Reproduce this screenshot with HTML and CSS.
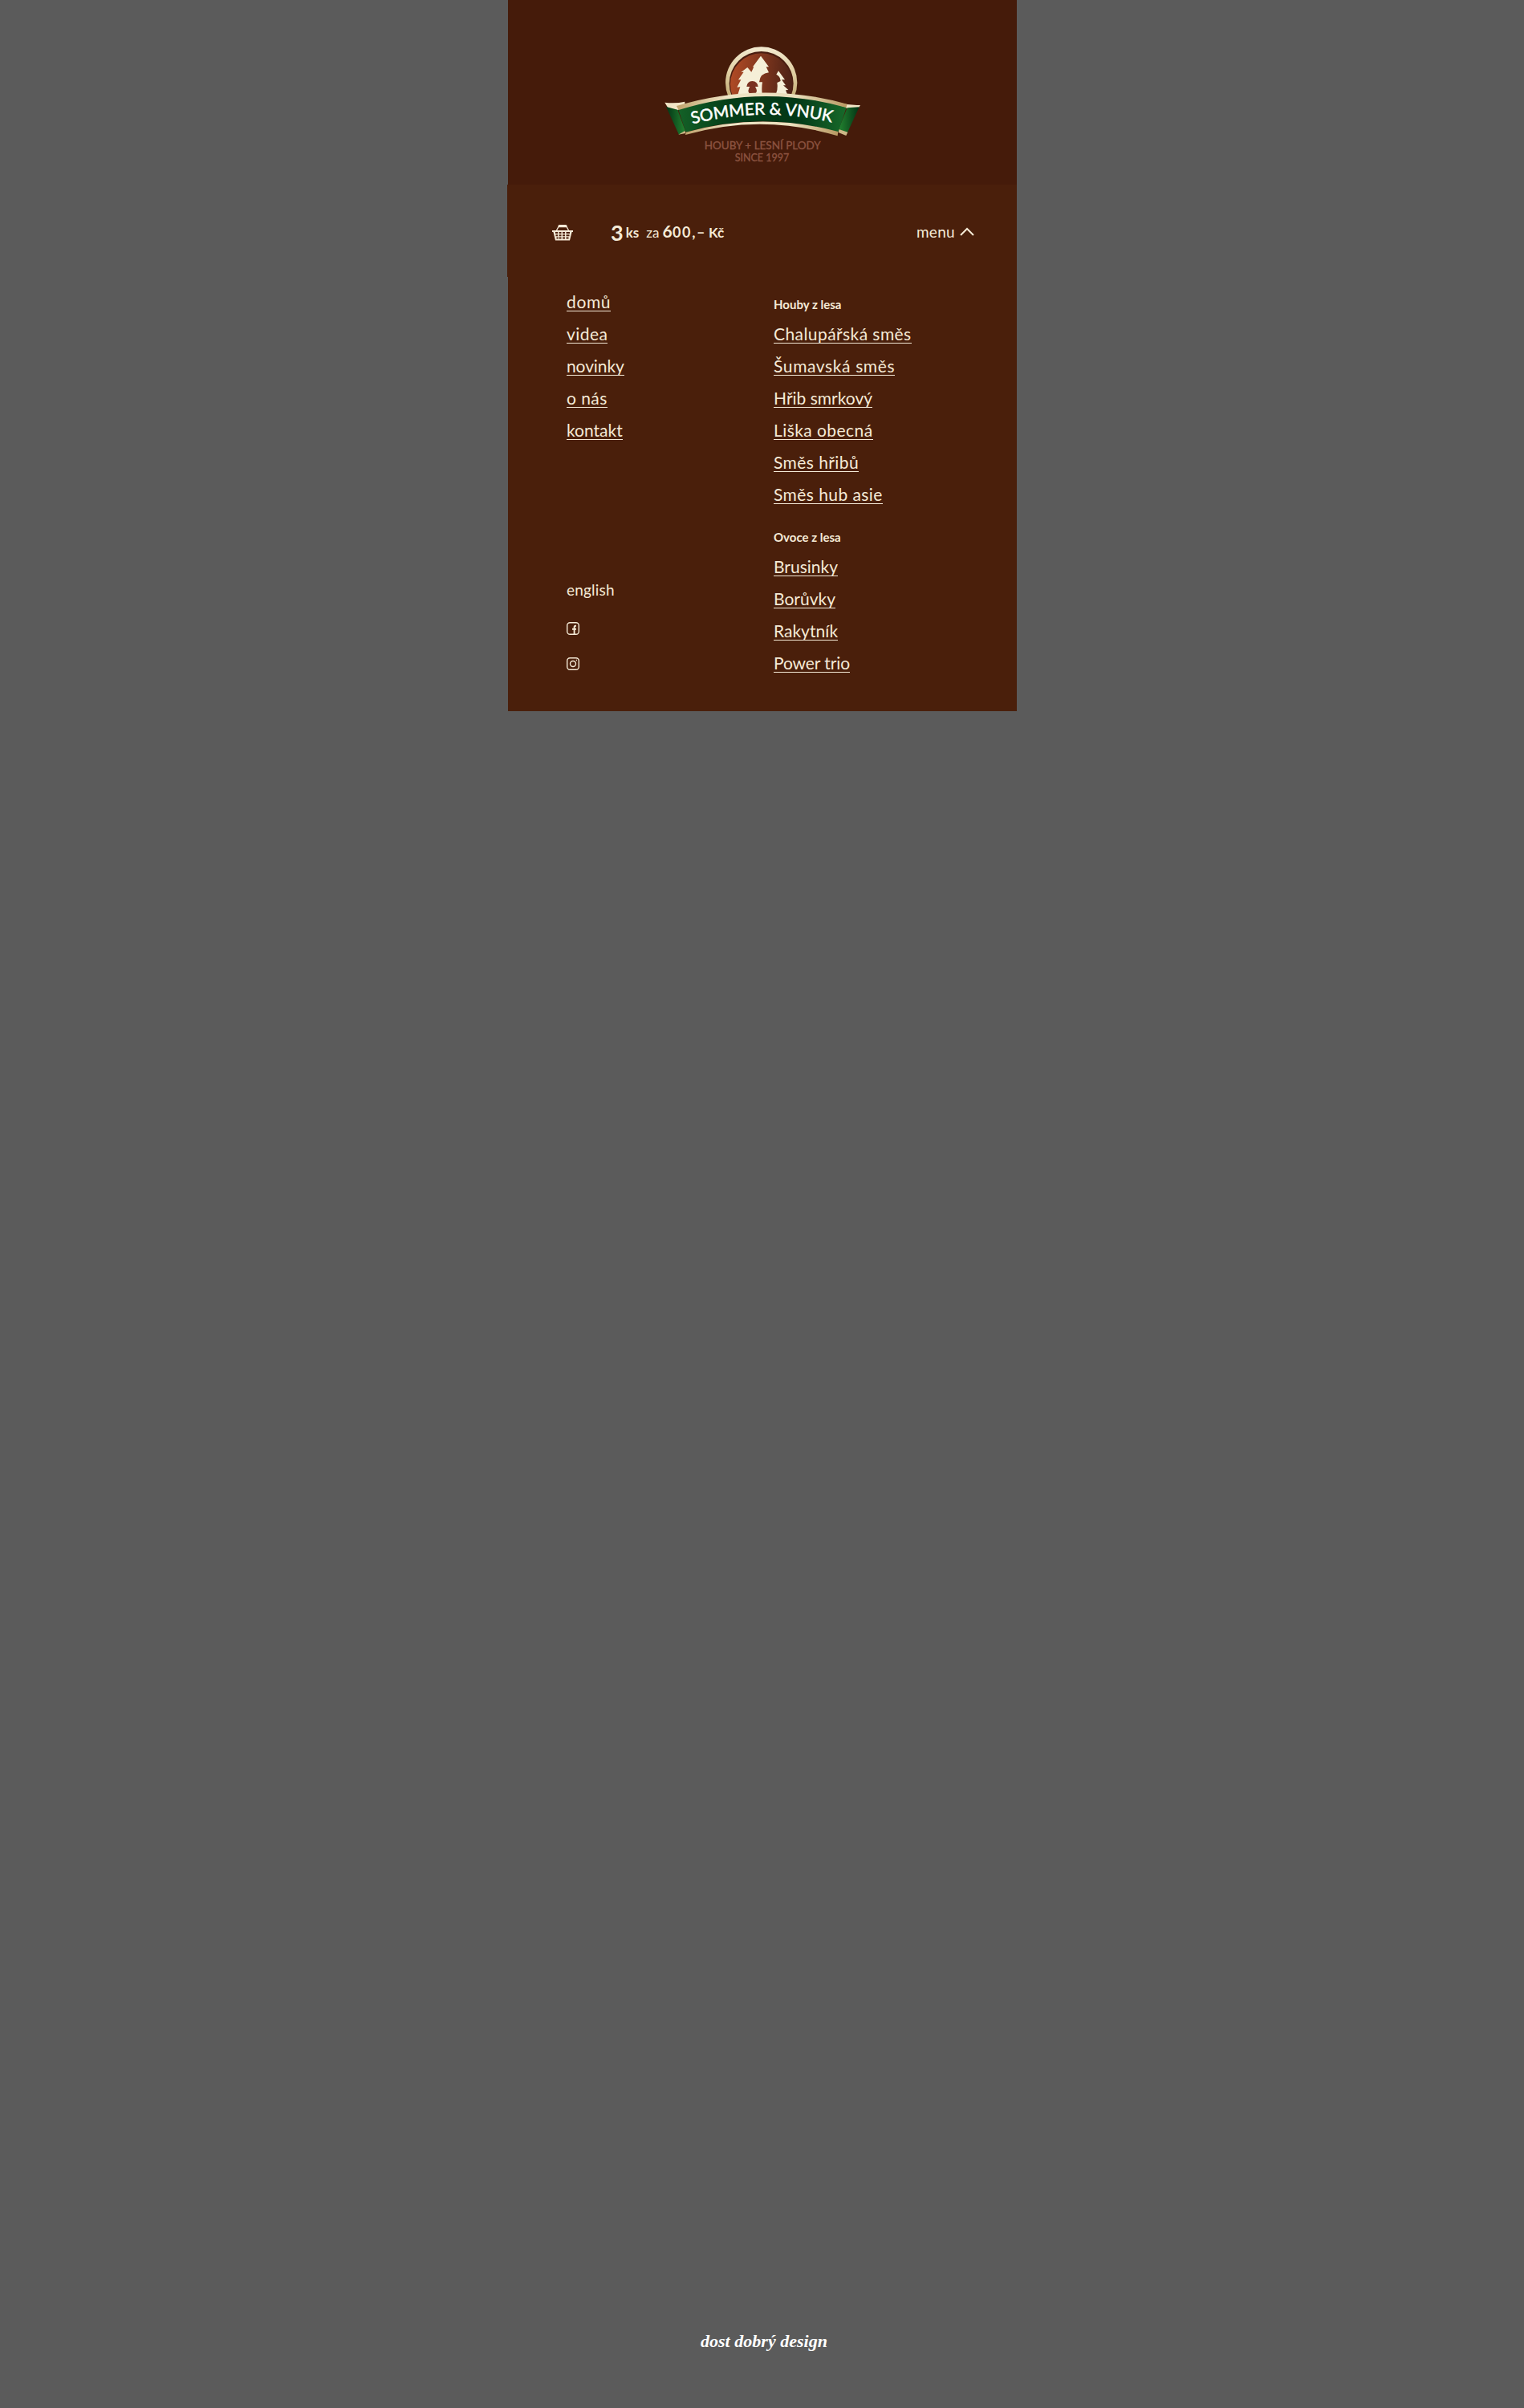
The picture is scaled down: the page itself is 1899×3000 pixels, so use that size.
FILE: index.html
```
<!DOCTYPE html>
<html lang="cs">
<head>
<meta charset="utf-8">
<title>Sommer &amp; Vnuk</title>
<link rel="stylesheet" href="styles.css">
</head>
<body>
<div class="page">
  <header class="header">
    <svg class="logo" viewBox="0 0 840 540" role="img" aria-label="Sommer &amp; Vnuk">
      <defs>
        <linearGradient id="disc" x1="0" x2="1" y1=".4" y2=".5"><stop offset="0" stop-color="#b04a25"/><stop offset="1" stop-color="#4b2115"/></linearGradient>
        <linearGradient id="ring" x1="0" x2="0" y1="0" y2="1"><stop offset="0" stop-color="#f3ead0"/><stop offset=".35" stop-color="#e0cfa3"/><stop offset=".75" stop-color="#bfa76e"/></linearGradient>
        <linearGradient id="green" x1="0" x2="1"><stop offset="0" stop-color="#146127"/><stop offset=".3" stop-color="#043d18"/><stop offset=".7" stop-color="#033817"/><stop offset="1" stop-color="#176a2a"/></linearGradient>
        <linearGradient id="gold" x1="0" x2="1"><stop offset="0" stop-color="#c0a26b"/><stop offset=".3" stop-color="#efe5c6"/><stop offset=".7" stop-color="#eadfbc"/><stop offset="1" stop-color="#b89861"/></linearGradient>
        <linearGradient id="tailL" x1="0" x2="1"><stop offset="0" stop-color="#023315"/><stop offset="1" stop-color="#238330"/></linearGradient>
        <linearGradient id="tailR" x1="0" x2="1"><stop offset="0" stop-color="#238330"/><stop offset="1" stop-color="#023315"/></linearGradient>
        <path id="arc" d="M158 344Q420 276 682 338"/>
      </defs>
      <circle cx="416" cy="189" r="134" fill="url(#ring)"/>
      <circle cx="416" cy="192" r="120" fill="#4a1d10"/>
      <circle cx="416" cy="195" r="116" fill="url(#disc)"/>
      <path fill="#f5efd7" d="M414 89L444 130L434 130L444 151Q411 154 408 187L420 187Q416 210 420 240H326L337 205L325 206L340 178L330 178L350 149L340 150L364 132L379 149L388 130L384 130Z"/>
      <path fill="#f5efd7" d="M480 145L504 178L492 178L507 199L498 199L517 216L507 217L516 240H466Q480 216 475 189L488 183Q487 165 472 158Z"/>
      <path fill="#7a3220" d="M361 204Q363 184 382 183Q402 184 404 204H393Q399 214 399 220Q396 233 382 234Q369 232 367 220Q368 211 373 204Z"/>
      <path fill="#f1e5c6" d="M55 263Q95 268 130 260V278L104 292H72Z"/>
      <path fill="url(#tailL)" d="M60 279L103 290L132 370L108 383Z"/>
      <path fill="#cdb887" d="M106 383L130 369L133 378Z"/>
      <path fill="#f1e5c6" d="M711 265Q747 275 786 273L780 283L735 285L710 278Z"/>
      <path fill="url(#tailR)" d="M737 283L782 280L737 377L705 363Z"/>
      <path fill="#cdb887" d="M706 363L739 374L733 387L704 375Z"/>
      <path fill="url(#green)" d="M106 290Q418 184 734 281L703 374Q418 294 134 374Z"/>
      <path fill="url(#gold)" d="M99 276Q418 180 737 269L733 282Q418 193 107 291Z"/>
      <path fill="url(#gold)" d="M134 374Q418 296 703 372L701 388Q418 302 132 384Z"/>
      <text class="logo-name"><textPath href="#arc" textLength="526" lengthAdjust="spacingAndGlyphs">SOMMER &amp; VNUK</textPath></text>
      <text class="logo-claim" x="203" y="438" textLength="435" lengthAdjust="spacingAndGlyphs">HOUBY + LESNÍ PLODY</text>
      <text class="logo-claim" x="317" y="483" textLength="203" lengthAdjust="spacingAndGlyphs">SINCE 1997</text>
    </svg>
  </header>

  <div class="bar">
    <svg class="basket" viewBox="0 0 26 20">
      <path d="M5 8L8 2.500H18L21 8" fill="none" stroke="currentColor" stroke-width="1.300"/>
      <path d="M9 1.500H17" stroke="currentColor" stroke-width="3" stroke-linecap="round"/>
      <path d="M0 7H26V9H24.600L22 19.500H4L1.400 9H0Z" fill="currentColor"/>
      <path class="basket-holes" d="M4 10H7M8.500 10H11.500M13 10H16M17.500 10H22M4.500 13.200H7M8.500 13.200H11.500M13 13.200H16M17.500 13.200H21.500M5.500 16.500H7.500M8.500 16.500H11.500M13 16.500H16M17.500 16.500H20.500"/>
    </svg>
    <p class="cart"><b class="count">3</b><b class="unit">ks</b><span class="for">za</span><b class="price">6<span class="zeros">00,–</span></b><b class="currency">Kč</b></p>
    <a class="toggle">menu<svg class="chevron" viewBox="0 0 18 11"><path d="M1 10L9 2L17 10" fill="none" stroke="currentColor" stroke-width="2"/></svg></a>
  </div>

  <nav class="menu">
    <div class="col-main">
      <ul class="links">
        <li><a class="wider">domů</a></li>
        <li><a class="wide">videa</a></li>
        <li><a class="tight">novinky</a></li>
        <li><a class="wide">o nás</a></li>
        <li><a>kontakt</a></li>
      </ul>
      <div class="extra">
        <a class="lang">english</a>
        <svg class="social" viewBox="0 0 16 16"><rect x=".7" y=".7" width="14.600" height="14.600" rx="3.500"/><path d="M12 4.800H11Q9.600 4.800 9.600 6.500V15M7 8.800H12" stroke-width="1.900"/></svg>
        <svg class="social" viewBox="0 0 16 16"><rect x=".7" y=".7" width="14.600" height="14.600" rx="3.500"/><circle cx="8" cy="8" r="3.500"/><path d="M11.800 3.500H13" stroke-width="1.600"/></svg>
      </div>
    </div>
    <div class="col-products">
      <h2>Houby z lesa</h2>
      <ul class="links">
        <li><a class="wide">Chalupářská směs</a></li>
        <li><a class="wider">Šumavská směs</a></li>
        <li><a>Hřib smrkový</a></li>
        <li><a class="wide">Liška obecná</a></li>
        <li><a class="wide">Směs hřibů</a></li>
        <li><a class="wide">Směs hub asie</a></li>
      </ul>
      <h2>Ovoce z lesa</h2>
      <ul class="links">
        <li><a>Brusinky</a></li>
        <li><a>Borůvky</a></li>
        <li><a>Rakytník</a></li>
        <li><a class="tight">Power trio</a></li>
      </ul>
    </div>
  </nav>

  <footer class="footer">
    <svg class="credit" viewBox="0 0 164 30"><text x="2" y="21" textLength="158" lengthAdjust="spacingAndGlyphs">dost dobrý design</text></svg>
  </footer>
</div>
</body>
</html>
```
FILE: styles.css
```
* { box-sizing: border-box; }
body { margin: 0; background: #5b5b5b; color: #f5ead7; font-family: Lato, "Open Sans", sans-serif; }
.page { width: 635px; height: 3000px; margin: 0 auto; display: flex; flex-direction: column; }
.header { height: 230px; margin-left: 1px; padding: 40px 0 0 177px; background: #451b0a; }
.logo { display: block; width: 280px; height: 180px; }
.logo-name { font-size: 62px; fill: #fff; stroke: #fff; stroke-width: 1.5; }
.logo-claim { font-size: 38px; fill: #8c5340; stroke: #8c5340; stroke-width: 1; }
.bar { height: 115px; background: #4a1f0b; display: flex; align-items: center; padding: 2px 53px 0 56px; }
.basket { width: 26px; height: 20px; margin-top: 2px; }
.basket-holes { stroke: #4a1f0b; stroke-width: 2; fill: none; }
.cart { margin: -2px 0 0 47px; display: flex; align-items: baseline; line-height: 30px; }
.count { font-size: 27px; position: relative; top: 4px; }
.unit, .currency { font-size: 17px; }
.unit { margin-left: 3px; }
.for { font-size: 17px; margin: 0 4px 0 9px; }
.price { font-size: 21px; letter-spacing: .5px; }
.zeros { font-size: 18px; letter-spacing: 1.6px; }
.currency { margin-left: 3px; }
.toggle { margin-left: auto; display: flex; align-items: center; font-size: 19px; letter-spacing: .3px; gap: 6px; }
.chevron { width: 18px; height: 11px; }
.menu { height: 541px; margin-left: 1px; background: #4a1f0b; display: flex; padding-left: 73px; }
.col-main { width: 258px; padding-top: 12px; }
.links { list-style: none; margin: 0; padding: 0; }
.links li { height: 40px; display: flex; align-items: flex-start; padding-top: 7px; }
.links a { font-size: 21px; line-height: 24px; height: 24px; border-bottom: 1px solid #f5ead7; white-space: nowrap; }
.links .wide { letter-spacing: .43px; }
.links .wider { letter-spacing: .62px; }
.links .tight { letter-spacing: -.1px; }
.extra { display: flex; flex-direction: column; padding-top: 166px; }
.lang { font-size: 19px; line-height: 24px; letter-spacing: .2px; margin-bottom: 28px; }
.social { width: 16px; height: 16px; margin-bottom: 28px; fill: none; stroke: currentColor; stroke-width: 1.4; }
.col-products { padding-top: 22px; }
h2 { margin: 0; font-size: 15px; line-height: 24px; height: 30px; font-weight: 700; }
.links + h2 { margin-top: 20px; }
.footer { margin-top: auto; padding: 0 0 67px 239px; }
.credit { display: block; width: 164px; height: 30px; fill: #fff; font: italic bold 22px "Liberation Serif", serif; }
```
